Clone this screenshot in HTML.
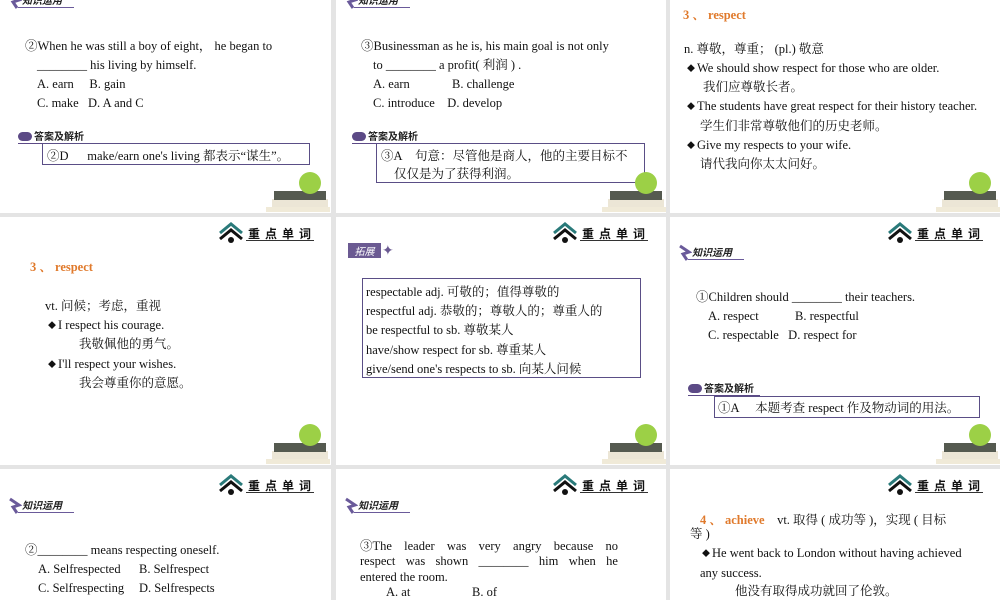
<!DOCTYPE html>
<html><head><meta charset="utf-8"><style>
*{margin:0;padding:0;box-sizing:border-box}
body{width:1000px;height:600px;background:#e4e4e4;position:relative;overflow:hidden;font-family:"Liberation Serif","Noto Serif CJK SC","Noto Sans CJK SC",serif;font-size:12.5px;color:#111}
.s{position:absolute;background:#fff;overflow:hidden}
.t{position:absolute;white-space:nowrap;line-height:16px}
.o{color:#e07a2c;font-weight:bold}
.d{font-size:8px;vertical-align:1px;margin-right:2px}
.box{position:absolute;border:1px solid #5a4e86}
.hd{position:absolute;width:104px;height:22px}
.hd .w{position:absolute;left:30px;top:4px;font-family:"Noto Sans CJK SC",sans-serif;font-weight:bold;font-size:12px;letter-spacing:5px;color:#111}
.hd .u{position:absolute;left:28px;top:19px;width:68px;height:1px;background:#333}
.lab{position:absolute;height:18px;width:80px}
.lab span{position:absolute;left:14px;top:0;font-family:"Noto Sans CJK SC",sans-serif;font-size:10px;font-style:italic;font-weight:bold;color:#222}
.lab i{position:absolute;left:10px;top:15px;width:56px;height:1px;background:#6a5a9a}
.ans{position:absolute;height:14px;width:90px}
.ans b{position:absolute;left:0;top:2px;width:14px;height:9px;border-radius:5px;background:#5c4a86}
.ans span{position:absolute;left:16px;top:-2px;font-family:"Noto Sans CJK SC",sans-serif;font-size:10px;font-weight:bold;color:#222}
.ans i{position:absolute;left:0;top:13px;width:72px;height:1px;background:#5c4a86}
.ap{position:absolute;width:70px;height:50px}
</style></head><body>
<div class="s" style="left:0;top:0;width:331px;height:213px">
 <div class="lab" style="left:8px;top:-8px"><svg width="14" height="18"><path d="M2 2 L11 8 L5 10 L9 16" stroke="#6a5a9a" stroke-width="3" fill="none"/></svg><span>知识运用</span><i></i></div>
 <div class="t" style="left:25px;top:38px">②When he was still a boy of eight， he began to</div>
 <div class="t" style="left:37px;top:57px">________ his living by himself.</div>
 <div class="t" style="left:37px;top:76px">A. earn&nbsp;&nbsp;&nbsp;&nbsp; B. gain</div>
 <div class="t" style="left:37px;top:95px">C. make&nbsp;&nbsp; D. A and C</div>
 <div class="ans" style="left:18px;top:130px"><b></b><span>答案及解析</span><i></i></div>
 <div class="box" style="left:42px;top:143px;width:268px;height:22px"></div>
 <div class="t" style="left:47px;top:148px">②D&nbsp;&nbsp;&nbsp;&nbsp;&nbsp; make/earn one's living 都表示“谋生”。</div>
 <svg class="ap" style="left:262px;top:163px" viewBox="0 0 70 50"><rect x="10" y="36" width="56" height="8" fill="#ece6d6"/><rect x="12" y="28" width="52" height="9" fill="#555a50"/><rect x="4" y="44" width="64" height="5" fill="#f0ead8"/><circle cx="48" cy="20" r="11" fill="#9cd046"/></svg>
</div>
<div class="s" style="left:336px;top:0;width:330px;height:213px">
 <div class="lab" style="left:8px;top:-8px"><svg width="14" height="18"><path d="M2 2 L11 8 L5 10 L9 16" stroke="#6a5a9a" stroke-width="3" fill="none"/></svg><span>知识运用</span><i></i></div>
 <div class="t" style="left:25px;top:38px">③Businessman as he is, his main goal is not only</div>
 <div class="t" style="left:37px;top:57px">to ________ a profit( 利润 ) .</div>
 <div class="t" style="left:37px;top:76px">A. earn</div><div class="t" style="left:116px;top:76px">B. challenge</div>
 <div class="t" style="left:37px;top:95px">C. introduce&nbsp;&nbsp;&nbsp; D. develop</div>
 <div class="ans" style="left:16px;top:130px"><b></b><span>答案及解析</span><i></i></div>
 <div class="box" style="left:40px;top:143px;width:269px;height:40px"></div>
 <div class="t" style="left:45px;top:148px">③A&nbsp;&nbsp;&nbsp; 句意：尽管他是商人，他的主要目标不</div>
 <div class="t" style="left:58px;top:166px">仅仅是为了获得利润。</div>
 <svg class="ap" style="left:262px;top:163px" viewBox="0 0 70 50"><rect x="10" y="36" width="56" height="8" fill="#ece6d6"/><rect x="12" y="28" width="52" height="9" fill="#555a50"/><rect x="4" y="44" width="64" height="5" fill="#f0ead8"/><circle cx="48" cy="20" r="11" fill="#9cd046"/></svg>
</div>
<div class="s" style="left:670px;top:0;width:330px;height:213px">
 <div class="t o" style="left:13px;top:7px">3 、 respect</div>
 <div class="t" style="left:14px;top:41px">n. 尊敬，尊重； (pl.) 敬意</div>
 <div class="t" style="left:17px;top:60px"><span class="d">◆</span>We should show respect for those who are older.</div>
 <div class="t" style="left:33px;top:79px">我们应尊敬长者。</div>
 <div class="t" style="left:17px;top:98px"><span class="d">◆</span>The students have great respect for their history teacher.</div>
 <div class="t" style="left:30px;top:118px">学生们非常尊敬他们的历史老师。</div>
 <div class="t" style="left:17px;top:137px"><span class="d">◆</span>Give my respects to your wife.</div>
 <div class="t" style="left:30px;top:156px">请代我向你太太问好。</div>
 <svg class="ap" style="left:262px;top:163px" viewBox="0 0 70 50"><rect x="10" y="36" width="56" height="8" fill="#ece6d6"/><rect x="12" y="28" width="52" height="9" fill="#555a50"/><rect x="4" y="44" width="64" height="5" fill="#f0ead8"/><circle cx="48" cy="20" r="11" fill="#9cd046"/></svg>
</div>

<div class="s" style="left:0;top:217px;width:331px;height:248px">
 <div class="hd" style="left:218px;top:4px"><svg width="26" height="22"><path d="M2 12 L13 3 L24 12" stroke="#2a7a7a" stroke-width="3" fill="none"/><path d="M2 18 L13 9 L24 18" stroke="#111" stroke-width="3" fill="none"/><circle cx="13" cy="19" r="3" fill="#111"/></svg><span class="w">重点单词</span><span class="u"></span></div>
 <div class="t o" style="left:30px;top:42px">3 、 respect</div>
 <div class="t" style="left:45px;top:81px">vt. 问候；考虑，重视</div>
 <div class="t" style="left:48px;top:100px"><span class="d">◆</span>I respect his courage.</div>
 <div class="t" style="left:79px;top:119px">我敬佩他的勇气。</div>
 <div class="t" style="left:48px;top:139px"><span class="d">◆</span>I'll respect your wishes.</div>
 <div class="t" style="left:79px;top:158px">我会尊重你的意愿。</div>
 <svg class="ap" style="left:262px;top:198px" viewBox="0 0 70 50"><rect x="10" y="36" width="56" height="8" fill="#ece6d6"/><rect x="12" y="28" width="52" height="9" fill="#555a50"/><rect x="4" y="44" width="64" height="5" fill="#f0ead8"/><circle cx="48" cy="20" r="11" fill="#9cd046"/></svg>
</div>
<div class="s" style="left:336px;top:217px;width:330px;height:248px">
 <div class="hd" style="left:216px;top:4px"><svg width="26" height="22"><path d="M2 12 L13 3 L24 12" stroke="#2a7a7a" stroke-width="3" fill="none"/><path d="M2 18 L13 9 L24 18" stroke="#111" stroke-width="3" fill="none"/><circle cx="13" cy="19" r="3" fill="#111"/></svg><span class="w">重点单词</span><span class="u"></span></div>
 <div style="position:absolute;left:12px;top:26px;width:33px;height:15px;background:#6b5a92;color:#fff;font-family:'Noto Sans CJK SC',sans-serif;font-size:10px;font-style:italic;text-align:center;line-height:15px">拓展</div>
 <div style="position:absolute;left:46px;top:26px;color:#6b5a92;font-size:14px">✦</div>
 <div class="box" style="left:26px;top:61px;width:279px;height:100px"></div>
 <div class="t" style="left:30px;top:67px">respectable adj. 可敬的；值得尊敬的</div>
 <div class="t" style="left:30px;top:86px">respectful adj. 恭敬的；尊敬人的；尊重人的</div>
 <div class="t" style="left:30px;top:105px">be respectful to sb. 尊敬某人</div>
 <div class="t" style="left:30px;top:125px">have/show respect for sb. 尊重某人</div>
 <div class="t" style="left:30px;top:144px">give/send one's respects to sb. 向某人问候</div>
 <svg class="ap" style="left:262px;top:198px" viewBox="0 0 70 50"><rect x="10" y="36" width="56" height="8" fill="#ece6d6"/><rect x="12" y="28" width="52" height="9" fill="#555a50"/><rect x="4" y="44" width="64" height="5" fill="#f0ead8"/><circle cx="48" cy="20" r="11" fill="#9cd046"/></svg>
</div>
<div class="s" style="left:670px;top:217px;width:330px;height:248px">
 <div class="hd" style="left:217px;top:4px"><svg width="26" height="22"><path d="M2 12 L13 3 L24 12" stroke="#2a7a7a" stroke-width="3" fill="none"/><path d="M2 18 L13 9 L24 18" stroke="#111" stroke-width="3" fill="none"/><circle cx="13" cy="19" r="3" fill="#111"/></svg><span class="w">重点单词</span><span class="u"></span></div>
 <div class="lab" style="left:8px;top:27px"><svg width="14" height="18"><path d="M2 2 L11 8 L5 10 L9 16" stroke="#6a5a9a" stroke-width="3" fill="none"/></svg><span>知识运用</span><i></i></div>
 <div class="t" style="left:26px;top:72px">①Children should ________ their teachers.</div>
 <div class="t" style="left:38px;top:91px">A. respect</div><div class="t" style="left:125px;top:91px">B. respectful</div>
 <div class="t" style="left:38px;top:110px">C. respectable&nbsp;&nbsp; D. respect for</div>
 <div class="ans" style="left:18px;top:165px"><b></b><span>答案及解析</span><i></i></div>
 <div class="box" style="left:44px;top:179px;width:266px;height:22px"></div>
 <div class="t" style="left:48px;top:183px">①A&nbsp;&nbsp;&nbsp;&nbsp; 本题考查 respect 作及物动词的用法。</div>
 <svg class="ap" style="left:262px;top:198px" viewBox="0 0 70 50"><rect x="10" y="36" width="56" height="8" fill="#ece6d6"/><rect x="12" y="28" width="52" height="9" fill="#555a50"/><rect x="4" y="44" width="64" height="5" fill="#f0ead8"/><circle cx="48" cy="20" r="11" fill="#9cd046"/></svg>
</div>

<div class="s" style="left:0;top:469px;width:331px;height:131px">
 <div class="hd" style="left:218px;top:4px"><svg width="26" height="22"><path d="M2 12 L13 3 L24 12" stroke="#2a7a7a" stroke-width="3" fill="none"/><path d="M2 18 L13 9 L24 18" stroke="#111" stroke-width="3" fill="none"/><circle cx="13" cy="19" r="3" fill="#111"/></svg><span class="w">重点单词</span><span class="u"></span></div>
 <div class="lab" style="left:8px;top:28px"><svg width="14" height="18"><path d="M2 2 L11 8 L5 10 L9 16" stroke="#6a5a9a" stroke-width="3" fill="none"/></svg><span>知识运用</span><i></i></div>
 <div class="t" style="left:25px;top:73px">②________ means respecting oneself.</div>
 <div class="t" style="left:38px;top:92px">A. Selfrespected</div><div class="t" style="left:139px;top:92px">B. Selfrespect</div>
 <div class="t" style="left:38px;top:111px">C. Selfrespecting</div><div class="t" style="left:139px;top:111px">D. Selfrespects</div>
</div>
<div class="s" style="left:336px;top:469px;width:330px;height:131px">
 <div class="hd" style="left:216px;top:4px"><svg width="26" height="22"><path d="M2 12 L13 3 L24 12" stroke="#2a7a7a" stroke-width="3" fill="none"/><path d="M2 18 L13 9 L24 18" stroke="#111" stroke-width="3" fill="none"/><circle cx="13" cy="19" r="3" fill="#111"/></svg><span class="w">重点单词</span><span class="u"></span></div>
 <div class="lab" style="left:8px;top:28px"><svg width="14" height="18"><path d="M2 2 L11 8 L5 10 L9 16" stroke="#6a5a9a" stroke-width="3" fill="none"/></svg><span>知识运用</span><i></i></div>
 <div class="t" style="left:24px;top:69px;width:258px;display:flex;justify-content:space-between"><span>③The</span><span>leader</span><span>was</span><span>very</span><span>angry</span><span>because</span><span>no</span></div>
 <div class="t" style="left:24px;top:84px;width:258px;display:flex;justify-content:space-between"><span>respect</span><span>was</span><span>shown</span><span>________</span><span>him</span><span>when</span><span>he</span></div>
 <div class="t" style="left:24px;top:100px">entered the room.</div>
 <div class="t" style="left:50px;top:115px">A. at</div><div class="t" style="left:136px;top:115px">B. of</div>
</div>
<div class="s" style="left:670px;top:469px;width:330px;height:131px">
 <div class="hd" style="left:217px;top:4px"><svg width="26" height="22"><path d="M2 12 L13 3 L24 12" stroke="#2a7a7a" stroke-width="3" fill="none"/><path d="M2 18 L13 9 L24 18" stroke="#111" stroke-width="3" fill="none"/><circle cx="13" cy="19" r="3" fill="#111"/></svg><span class="w">重点单词</span><span class="u"></span></div>
 <div class="t" style="left:30px;top:43px"><span class="o">4 、 achieve</span>&nbsp;&nbsp;&nbsp; vt. 取得 ( 成功等 )，实现 ( 目标</div>
 <div class="t" style="left:20px;top:57px">等 )</div>
 <div class="t" style="left:32px;top:76px"><span class="d">◆</span>He went back to London without having achieved</div>
 <div class="t" style="left:30px;top:96px">any success.</div>
 <div class="t" style="left:65px;top:114px">他没有取得成功就回了伦敦。</div>
</div>
</body></html>
